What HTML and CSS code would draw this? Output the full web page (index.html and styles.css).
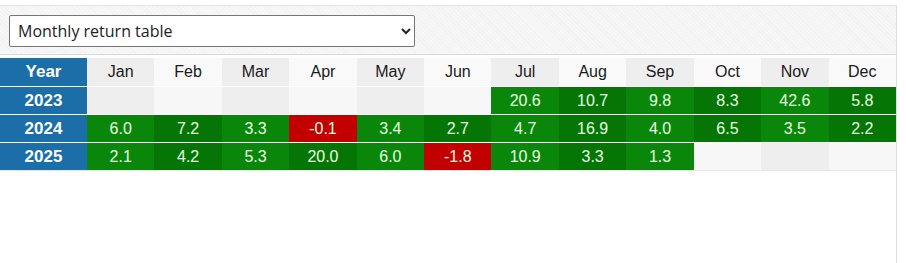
FILE: index.html
```html
<!DOCTYPE html>
<html>
<head>
<meta charset="utf-8">
<link rel="stylesheet" href="styles.css">
</head>
<body>
<div class="wrap">
  <div class="toolbar">
    <select class="picker">
      <option>Monthly return table</option>
    </select>
  </div>
  <div class="grid">
    <div class="yr head">Year</div>
    <div class="hd odd">Jan</div><div class="hd">Feb</div><div class="hd odd">Mar</div><div class="hd">Apr</div>
    <div class="hd odd">May</div><div class="hd">Jun</div><div class="hd odd">Jul</div><div class="hd">Aug</div>
    <div class="hd odd">Sep</div><div class="hd">Oct</div><div class="hd odd">Nov</div><div class="hd">Dec</div>

    <div class="yr">2023</div>
    <div class="c empty odd"></div><div class="c empty"></div><div class="c empty odd"></div><div class="c empty"></div>
    <div class="c empty odd"></div><div class="c empty"></div>
    <div class="c pos odd">20.6</div><div class="c pos">10.7</div><div class="c pos odd">9.8</div><div class="c pos">8.3</div>
    <div class="c pos odd">42.6</div><div class="c pos">5.8</div>

    <div class="yr">2024</div>
    <div class="c pos odd">6.0</div><div class="c pos">7.2</div><div class="c pos odd">3.3</div><div class="c neg">-0.1</div>
    <div class="c pos odd">3.4</div><div class="c pos">2.7</div><div class="c pos odd">4.7</div><div class="c pos">16.9</div>
    <div class="c pos odd">4.0</div><div class="c pos">6.5</div><div class="c pos odd">3.5</div><div class="c pos">2.2</div>

    <div class="yr">2025</div>
    <div class="c pos odd">2.1</div><div class="c pos">4.2</div><div class="c pos odd">5.3</div><div class="c pos">20.0</div>
    <div class="c pos odd">6.0</div><div class="c neg">-1.8</div><div class="c pos odd">10.9</div><div class="c pos">3.3</div>
    <div class="c pos odd">1.3</div><div class="c empty"></div><div class="c empty odd"></div><div class="c empty"></div>
  </div>
</div>
</body>
</html>
```

FILE: styles.css
```css
html, body {
  margin: 0;
  background: #ffffff;
}
body {
  padding-top: 5px;
}
.wrap {
  width: 896px;
  height: 258px;
  border-right: 1px solid #dcdcdc;
}
.toolbar {
  border-top: 1px solid #e4e4e4;
  border-bottom: 1px solid #dadada;
  background-color: #f7f7f7;
  background-image: repeating-linear-gradient(45deg, rgba(0,0,0,0.018) 0 1px, transparent 1px 3px);
  padding: 9px 0 0 9px;
  box-sizing: border-box;
  height: 50px;
}
.picker {
  width: 406px;
  height: 32px;
  border: 1px solid #767676;
  border-radius: 2px;
  background: #ffffff;
  font-family: "Open Sans", "Noto Sans", sans-serif;
  font-size: 16px;
  color: #222;
  padding: 0 4px;
}
.grid {
  margin-top: 3px;
  display: grid;
  grid-template-columns: 87px repeat(12, 1fr);
  grid-auto-rows: 28px;
  font-family: "Liberation Sans", Arial, sans-serif;
  font-size: 16px;
  border-bottom: 1px solid #e6e6e6;
}
.grid > div {
  display: flex;
  align-items: center;
  justify-content: center;
  box-sizing: border-box;
}
.yr {
  background: #1b6ea8;
  color: #ffffff;
  font-weight: bold;
  font-size: 17px;
  border-top: 1px solid #ffffff;
}
.yr.head {
  border-top: none;
}
.hd {
  background: #f9f9f9;
  color: #1a1a1a;
}
.hd.odd {
  background: #eeeeee;
}
.c {
  border-top: 1px solid #ffffff;
  color: #e6ffe0;
}
.empty {
  background: #f7f7f7;
}
.empty.odd {
  background: #eeeeee;
}
.pos {
  background: #057605;
}
.pos.odd {
  background: #0a870a;
}
.neg {
  background: #c20000;
}
```
